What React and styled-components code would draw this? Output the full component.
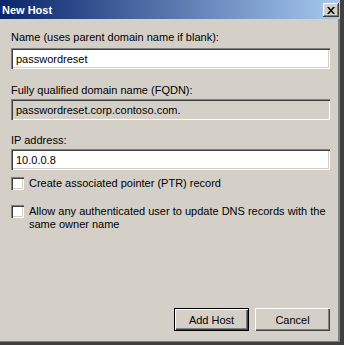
import styled, { createGlobalStyle } from "styled-components";

const Global = createGlobalStyle`
  html, body { margin: 0; padding: 0; background: #d4d0c8; }
  body { font-family: "Liberation Sans", Tahoma, sans-serif; font-size: 11px; color: #000; }
`;

const Window = styled.div`
  width: 344px;
  height: 345px;
  box-sizing: border-box;
  display: flex;
  flex-direction: column;
  background: #d4d0c8;
  border-right: 4px solid #404040;
  border-bottom: 3px solid #404040;
  box-shadow: inset -2px -1px 0 #808080, inset -3px 0 0 #d4d0c8;
`;

const TitleBar = styled.div`
  height: 19px;
  flex: none;
  display: flex;
  align-items: center;
  justify-content: space-between;
  padding: 0 0 0 2px;
  background: linear-gradient(to right, #0a246a, #a6caf0);
  color: #fff;
  font-weight: bold;
  font-size: 11px;
`;

const CloseButton = styled.div`
  width: 16px;
  height: 14px;
  box-sizing: border-box;
  margin-right: 1px;
  margin-top: 1px;
  background: #d4d0c8;
  display: flex;
  align-items: center;
  justify-content: center;
  box-shadow: inset -1px -1px 0 #404040, inset 1px 1px 0 #fff, inset -2px -2px 0 #808080;
`;

const Body = styled.div`
  flex: 1;
  display: flex;
  flex-direction: column;
  padding: 12px 10px 8px 11px;
`;

const Label = styled.div`
  line-height: 13px;
  margin-bottom: ${(p) => p.$gap}px;
`;

const TextBox = styled.div`
  height: 21px;
  box-sizing: border-box;
  padding: 0 5px;
  display: flex;
  align-items: center;
  background: ${(p) => (p.$readOnly ? "#d4d0c8" : "#fff")};
  box-shadow: inset 1px 1px 0 #808080, inset 2px 2px 0 #404040, inset -1px -1px 0 #fff,
    inset -2px -2px 0 #d4d0c8;
  margin-bottom: ${(p) => p.$gap}px;
`;

const CheckRow = styled.label`
  display: flex;
  align-items: flex-start;
  gap: 5px;
  line-height: 13px;
  margin-bottom: ${(p) => p.$gap}px;
`;

const Box = styled.span`
  flex: none;
  width: 13px;
  height: 13px;
  box-sizing: border-box;
  background: #fff;
  box-shadow: inset 1px 1px 0 #808080, inset 2px 2px 0 #404040, inset -1px -1px 0 #fff,
    inset -2px -2px 0 #d4d0c8;
`;

const Buttons = styled.div`
  margin-top: auto;
  display: flex;
  justify-content: flex-end;
  gap: 6px;
  margin-bottom: 3px;
`;

const Button = styled.button`
  width: 75px;
  height: 23px;
  box-sizing: border-box;
  font: inherit;
  color: #000;
  background: #d4d0c8;
  border: ${(p) => (p.$default ? "1px solid #000" : "none")};
  padding: 0;
  box-shadow: ${(p) =>
    p.$default
      ? "inset 1px 1px 0 #fff, inset -1px -1px 0 #404040, inset -2px -2px 0 #808080"
      : "inset 1px 1px 0 #fff, inset -1px -1px 0 #404040, inset -2px -2px 0 #808080"};
`;

export default function App() {
  return (
    <>
      <Global />
      <Window>
        <TitleBar>
          <span>New Host</span>
          <CloseButton>
            <svg width="8" height="7" viewBox="0 0 8 7">
              <path d="M0 0h2l2 2.5L6 0h2L5 3.5 8 7H6L4 4.5 2 7H0l3-3.5z" fill="#000" />
            </svg>
          </CloseButton>
        </TitleBar>
        <Body>
          <Label $gap={4}>Name (uses parent domain name if blank):</Label>
          <TextBox $gap={15}>passwordreset</TextBox>
          <Label $gap={2}>Fully qualified domain name (FQDN):</Label>
          <TextBox $readOnly $gap={14}>passwordreset.corp.contoso.com.</TextBox>
          <Label $gap={2}>IP address:</Label>
          <TextBox $gap={7}>10.0.0.8</TextBox>
          <CheckRow $gap={15}>
            <Box />
            <span>Create associated pointer (PTR) record</span>
          </CheckRow>
          <CheckRow $gap={0}>
            <Box />
            <span>
              Allow any authenticated user to update DNS records with the
              <br />
              same owner name
            </span>
          </CheckRow>
          <Buttons>
            <Button $default>Add Host</Button>
            <Button>Cancel</Button>
          </Buttons>
        </Body>
      </Window>
    </>
  );
}
